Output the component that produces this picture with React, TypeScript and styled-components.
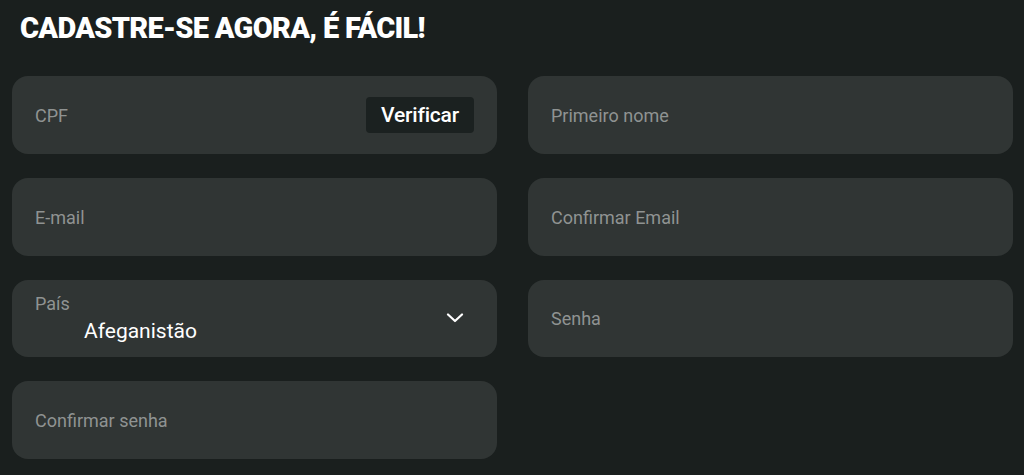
import React from "react";
import styled, { createGlobalStyle } from "styled-components";

const Global = createGlobalStyle`
  html, body { margin: 0; padding: 0; background: #1a1f1e; }
  body { font-family: Roboto, "Liberation Sans", Arial, sans-serif; }
  * { box-sizing: border-box; }
`;

const Page = styled.div`
  width: 1024px;
  height: 475px;
  padding: 11px 11px 0 12px;
  background: #1a1f1e;
  overflow: hidden;
`;

const Title = styled.h1`
  margin: 0 0 0 8px;
  height: 65px;
  font-family: Roboto, sans-serif;
  font-weight: 900;
  font-size: 29px;
  line-height: 34px;
  letter-spacing: -0.7px;
  color: #ffffff;
`;

const Grid = styled.div`
  display: grid;
  grid-template-columns: 485px 485px;
  column-gap: 31px;
  row-gap: 24px;
`;

const Field = styled.div<{ $h?: number }>`
  height: ${(p) => p.$h ?? 78}px;
  background: #303534;
  border-radius: 16px;
  display: flex;
  align-items: center;
  padding: 0 23px 0 23px;
  position: relative;
`;

const Placeholder = styled.span`
  flex: 1;
  font-size: 18px;
  color: #8f9392;
  letter-spacing: 0;
`;

const VerifyButton = styled.button`
  height: 36px;
  width: 108px;
  border: none;
  border-radius: 4px;
  background: #1b2120;
  color: #ffffff;
  font-family: Roboto, sans-serif;
  font-size: 21px;
  font-weight: 500;
  letter-spacing: -0.2px;
  padding: 0;
`;

const SelectBody = styled.div`
  flex: 1;
  display: flex;
  flex-direction: column;
  align-self: stretch;
  padding-top: 14px;
`;

const SelectLabel = styled.span`
  font-size: 18px;
  line-height: 20px;
  color: #8f9392;
`;

const SelectValue = styled.span`
  margin-left: 49px;
  margin-top: 5px;
  font-size: 21px;
  line-height: 24px;
  color: #ffffff;
`;

const Chevron = styled.svg`
  width: 18px;
  height: 10px;
  margin-right: 10px;
  margin-top: -2px;
`;

export default function App() {
  return (
    <>
      <Global />
      <Page>
        <Title>CADASTRE-SE AGORA, É FÁCIL!</Title>
        <Grid>
          <Field>
            <Placeholder>CPF</Placeholder>
            <VerifyButton>Verificar</VerifyButton>
          </Field>
          <Field>
            <Placeholder>Primeiro nome</Placeholder>
          </Field>
          <Field>
            <Placeholder>E-mail</Placeholder>
          </Field>
          <Field>
            <Placeholder>Confirmar Email</Placeholder>
          </Field>
          <Field $h={77}>
            <SelectBody>
              <SelectLabel>País</SelectLabel>
              <SelectValue>Afeganistão</SelectValue>
            </SelectBody>
            <Chevron viewBox="0 0 18 10" fill="none">
              <path d="M2 1.5 L9 8 L16 1.5" stroke="#ffffff" strokeWidth="2.2" strokeLinecap="round" strokeLinejoin="round" />
            </Chevron>
          </Field>
          <Field $h={77}>
            <Placeholder>Senha</Placeholder>
          </Field>
          <Field>
            <Placeholder>Confirmar senha</Placeholder>
          </Field>
        </Grid>
      </Page>
    </>
  );
}
